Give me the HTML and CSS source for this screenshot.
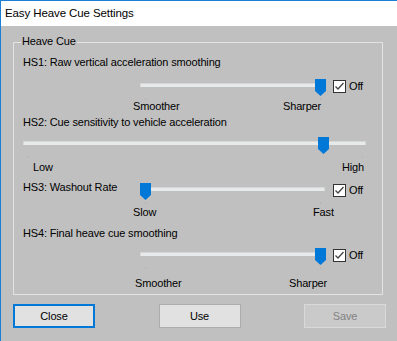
FILE: index.html
```html
<!DOCTYPE html>
<html lang="en">
<head>
  <meta charset="UTF-8">
  <title>Easy Heave Cue Settings</title>
  <link rel="stylesheet" href="styles.css">
</head>
<body>
  <div class="window">
    <div class="titlebar">Easy Heave Cue Settings</div>

    <div class="client">
      <!-- Heave Cue group -->
      <div class="group">
        <span class="legend">Heave Cue</span>

        <!-- HS1 -->
        <div class="label hs1">HS1: Raw vertical acceleration smoothing</div>
        <div class="row row1">
          <div class="slider short">
            <div class="track"></div>
            <svg class="thumb" style="left: 175px" width="11" height="17" viewBox="0 0 11 17"><polygon points="0,0 11,0 11,12 5.5,17 0,12"/></svg>
            <span class="tick tick-min"></span>
            <span class="tick tick-max"></span>
          </div>
          <label class="check"><span class="box"><svg width="11" height="11" viewBox="0 0 11 11"><polyline points="1.5,5.5 4,8 9.5,2"/></svg></span>Off</label>
        </div>
        <div class="scale scale1"><span>Smoother</span><span>Sharper</span></div>

        <!-- HS2 -->
        <div class="label hs2">HS2: Cue sensitivity to vehicle acceleration</div>
        <div class="row row2">
          <div class="slider wide">
            <div class="track"></div>
            <svg class="thumb" style="left: 295px" width="11" height="17" viewBox="0 0 11 17"><polygon points="0,0 11,0 11,12 5.5,17 0,12"/></svg>
            <span class="tick tick-min"></span>
            <span class="tick tick-max"></span>
          </div>
        </div>
        <div class="scale scale2"><span>Low</span><span>High</span></div>

        <!-- HS3 -->
        <div class="row row3">
          <div class="label inline">HS3: Washout Rate</div>
          <div class="slider short">
            <div class="track"></div>
            <svg class="thumb" style="left: 0px" width="11" height="17" viewBox="0 0 11 17"><polygon points="0,0 11,0 11,12 5.5,17 0,12"/></svg>
            <span class="tick tick-min"></span>
            <span class="tick tick-max"></span>
          </div>
          <label class="check"><span class="box"><svg width="11" height="11" viewBox="0 0 11 11"><polyline points="1.5,5.5 4,8 9.5,2"/></svg></span>Off</label>
        </div>
        <div class="scale scale3"><span>Slow</span><span>Fast</span></div>

        <!-- HS4 -->
        <div class="label hs4">HS4: Final heave cue smoothing</div>
        <div class="row row4">
          <div class="slider short">
            <div class="track"></div>
            <svg class="thumb" style="left: 175px" width="11" height="17" viewBox="0 0 11 17"><polygon points="0,0 11,0 11,12 5.5,17 0,12"/></svg>
            <span class="tick tick-min"></span>
            <span class="tick tick-max"></span>
          </div>
          <label class="check"><span class="box"><svg width="11" height="11" viewBox="0 0 11 11"><polyline points="1.5,5.5 4,8 9.5,2"/></svg></span>Off</label>
        </div>
        <div class="scale scale4"><span>Smoother</span><span>Sharper</span></div>
      </div>

      <!-- Dialog buttons -->
      <div class="buttons">
        <button class="btn default">Close</button>
        <button class="btn">Use</button>
        <button class="btn" disabled>Save</button>
      </div>
    </div>
  </div>
</body>
</html>
```

FILE: styles.css
```css
body {
  margin: 0;
  font-family: "Liberation Sans", Arial, sans-serif;
  font-size: 11px;
  letter-spacing: -0.15px;
  color: #000;
  background: #c0c0c0;
}
.window {
  width: 396px;
  height: 340px;
  border-top: 1px solid #1c7fd6;
  border-left: 1px solid #1c7fd6;
  overflow: hidden;
}
.titlebar {
  height: 25px;
  line-height: 25px;
  padding-left: 4px;
  background: #fff;
  font-size: 11.5px;
  letter-spacing: -0.1px;
}
.client {
  background: #c0c0c0;
  height: 315px;
  padding-top: 16px;
  box-sizing: border-box;
}

/* group box */
.group {
  position: relative;
  margin-left: 12px;
  width: 370px;
  height: 253px;
  box-sizing: border-box;
  border: 1px solid #e3e3e3;
  padding-left: 9px;
}
.legend {
  position: absolute;
  left: 7px;
  top: -8px;
  padding: 0 1px;
  line-height: 13px;
  background: #c0c0c0;
}
.label {
  line-height: 13px;
  white-space: nowrap;
}
.hs1 { margin-top: 13px; }
.hs2 { margin-top: 3px; }
.hs4 { margin-top: 8px; }
.label.inline {
  width: 117px;
}

.row {
  display: flex;
  align-items: flex-start;
}
.row1 { margin-top: 10px; }
.row2 { margin-top: 8px; }
.row3 { margin-top: 7px; }
.row4 { margin-top: 8px; }
.row1 .slider, .row4 .slider { margin-left: 117px; }
.row3 .slider { margin-top: 2px; }
.row3 .check { margin-top: 3px; }

/* trackbar */
.slider {
  position: relative;
  height: 17px;
}
.slider.short { width: 186px; }
.slider.wide { width: 344px; }
.track {
  margin-top: 4px;
  margin-right: 1px;
  height: 4px;
  box-sizing: border-box;
  background: #e7eaea;
  border: 1px solid #d6d6d6;
  border-bottom-color: #e7eaea;
}
.thumb {
  position: absolute;
  top: 0;
  display: block;
  fill: #0078d7;
}
.tick {
  position: absolute;
  top: 19px;
  width: 1px;
  height: 2px;
  background: #b4b4b4;
}
.tick-min { left: 5px; }
.short .tick-max { left: 180px; }
.wide .tick-max { left: 339px; }

/* checkbox */
.check {
  display: flex;
  align-items: center;
  margin-left: 7px;
  margin-top: 1px;
  line-height: 13px;
}
.box {
  width: 13px;
  height: 13px;
  box-sizing: border-box;
  border: 1px solid #333;
  background: #fff;
  margin-right: 3px;
}
.box svg {
  display: block;
  fill: none;
  stroke: #444;
  stroke-width: 1.3;
}

/* scale captions */
.scale {
  display: flex;
  line-height: 13px;
}
.scale1 { margin-top: 4px; }
.scale2 { margin-top: 7px; }
.scale3 { margin-top: 6px; }
.scale4 { margin-top: 12px; }
.scale1 span:first-child { margin-left: 110px; width: 150px; }
.scale2 span:first-child { margin-left: 10px; width: 309px; }
.scale3 span:first-child { margin-left: 110px; width: 180px; }
.scale4 span:first-child { margin-left: 112px; width: 154px; }

/* buttons */
.buttons {
  display: flex;
  justify-content: space-between;
  margin: 9px 0 0 12px;
  width: 373px;
}
.btn {
  width: 82px;
  height: 24px;
  box-sizing: border-box;
  font: inherit;
  letter-spacing: inherit;
  color: #000;
  background: #e1e1e1;
  border: 1px solid #adadad;
  padding: 0;
}
.btn.default {
  border: 2px solid #0078d7;
}
.btn:disabled {
  background: #cacaca;
  border-color: #d9d9d9;
  color: #838383;
}
```
